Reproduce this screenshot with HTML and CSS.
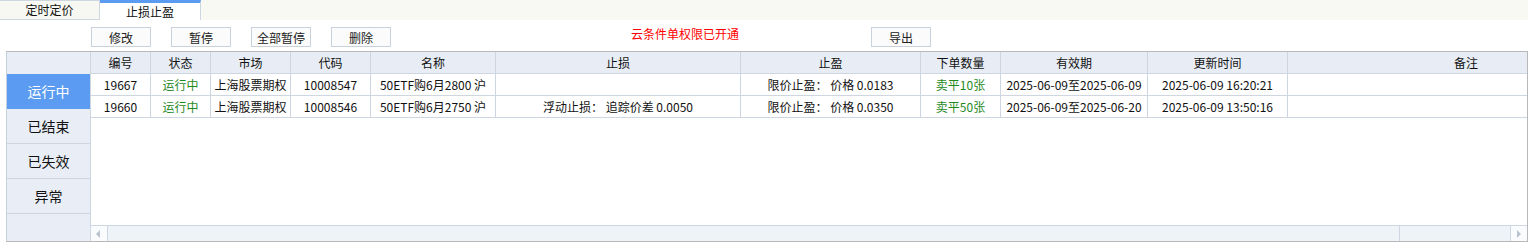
FILE: index.html
```html
<!DOCTYPE html>
<html lang="zh-CN">
<head>
    <meta charset="UTF-8">
    <title>止损止盈</title>
    <link rel="stylesheet" href="styles.css">
</head>
<body>
    <div class="tabbar">
        <div class="tab">定时定价</div>
        <div class="tab active">止损止盈</div>
    </div>

    <div class="toolbar">
        <button class="btn">修改</button>
        <button class="btn">暂停</button>
        <button class="btn">全部暂停</button>
        <button class="btn">删除</button>
        <span class="notice">云条件单权限已开通</span>
        <button class="btn export">导出</button>
    </div>

    <div class="panel">
        <div class="side">
            <div class="side-head"></div>
            <div class="side-item active">运行中</div>
            <div class="side-item">已结束</div>
            <div class="side-item">已失效</div>
            <div class="side-item">异常</div>
        </div>

        <div class="grid-wrap">
            <div class="grid">
                <div class="row head">
                    <div class="cell">编号</div>
                    <div class="cell">状态</div>
                    <div class="cell">市场</div>
                    <div class="cell">代码</div>
                    <div class="cell">名称</div>
                    <div class="cell">止损</div>
                    <div class="cell">止盈</div>
                    <div class="cell">下单数量</div>
                    <div class="cell">有效期</div>
                    <div class="cell">更新时间</div>
                    <div class="cell">备注</div>
                </div>
                <div class="row">
                    <div class="cell">19667</div>
                    <div class="cell green">运行中</div>
                    <div class="cell">上海股票期权</div>
                    <div class="cell">10008547</div>
                    <div class="cell">50ETF购6月2800 沪</div>
                    <div class="cell"></div>
                    <div class="cell">限价止盈： 价格 0.0183</div>
                    <div class="cell green">卖平10张</div>
                    <div class="cell">2025-06-09至2025-06-09</div>
                    <div class="cell">2025-06-09 16:20:21</div>
                    <div class="cell"></div>
                </div>
                <div class="row">
                    <div class="cell">19660</div>
                    <div class="cell green">运行中</div>
                    <div class="cell">上海股票期权</div>
                    <div class="cell">10008546</div>
                    <div class="cell">50ETF购6月2750 沪</div>
                    <div class="cell">浮动止损： 追踪价差 0.0050</div>
                    <div class="cell">限价止盈： 价格 0.0350</div>
                    <div class="cell green">卖平50张</div>
                    <div class="cell">2025-06-09至2025-06-20</div>
                    <div class="cell">2025-06-09 13:50:16</div>
                    <div class="cell"></div>
                </div>
            </div>

            <div class="hscroll">
                <div class="arrow left"></div>
                <div class="track">
                    <div class="thumb"></div>
                </div>
                <div class="arrow right"></div>
            </div>
        </div>
    </div>
</body>
</html>
```

FILE: styles.css
```css
:root {
    --line: #cdd6e1;
    --head-bg: #e8edf5;
    --blue: #5b9cf2;
    --green: #1f8a1f;
    --text: #111;
}

body {
    margin: 0;
    font-family: "Noto Sans CJK SC", "Noto Sans", sans-serif;
    font-size: 12px;
    color: var(--text);
    background: #fff;
    width: 1528px;
    height: 244px;
    overflow: hidden;
}

/* top tabs */
.tabbar {
    display: flex;
    height: 20px;
    background: #f9f9f4;
}

.tab {
    box-sizing: border-box;
    width: 100px;
    height: 20px;
    line-height: 18px;
    text-align: center;
    background: #f7f8f2;
    border-top: 1px solid var(--line);
    border-bottom: 1px solid var(--line);
    border-right: 1px solid var(--line);
}

.tab.active {
    width: 101px;
    background: #fff;
    border-top: 3px solid var(--blue);
    border-bottom: none;
    line-height: 17px;
}

/* toolbar */
.toolbar {
    display: flex;
    align-items: flex-start;
    height: 31px;
    box-sizing: border-box;
    padding: 7px 0 0 91px;
}

.btn {
    box-sizing: border-box;
    width: 60px;
    height: 20px;
    margin: 0 20px 0 0;
    padding: 0;
    font-family: inherit;
    font-size: 12px;
    color: #222;
    background: #fbfbfb;
    border: 1px solid #c9d1dc;
    border-radius: 0;
}

.notice {
    margin-left: 220px;
    width: 108px;
    line-height: 14px;
    color: #ff0000;
    white-space: nowrap;
}

.btn.export {
    margin-left: 132px;
}

/* main panel */
.panel {
    display: flex;
    box-sizing: border-box;
    margin-left: 6px;
    width: 1522px;
    height: 191px;
    border: 1px solid #b8b8b8;
    border-left-color: #c6d0dc;
}

.side {
    box-sizing: border-box;
    width: 84px;
    flex-shrink: 0;
    background: #e9eef6;
    border-right: 1px solid var(--line);
}

.side-head {
    height: 22px;
}

.side-item {
    box-sizing: border-box;
    height: 35px;
    line-height: 34px;
    text-align: center;
    font-size: 14px;
    border-bottom: 1px solid var(--line);
}

.side-item.active {
    background: var(--blue);
    border-bottom-color: var(--blue);
    color: #fff;
}

.grid-wrap {
    flex: 1;
    display: flex;
    flex-direction: column;
    overflow: hidden;
}

.grid {
    flex: 1;
    overflow: hidden;
}

.row {
    display: grid;
    grid-template-columns: 60px 60px 80px 80px 125px 245px 180px 80px 147px 140px 357px;
    height: 22px;
    box-sizing: border-box;
    border-bottom: 1px solid var(--line);
}

.row.head {
    background: var(--head-bg);
}

.cell {
    box-sizing: border-box;
    border-right: 1px solid var(--line);
    line-height: 21px;
    text-align: center;
    white-space: pre;
    overflow: hidden;
}

.green {
    color: var(--green);
}

/* horizontal scrollbar */
.hscroll {
    display: flex;
    height: 16px;
    box-sizing: border-box;
    border-top: 1px solid var(--line);
    background: #eef3f8;
}

.arrow {
    position: relative;
    box-sizing: border-box;
    width: 17px;
    background: #f9fbfd;
}

.arrow.left {
    border-right: 1px solid var(--line);
}

.arrow.right {
    border-left: 1px solid var(--line);
}

.arrow::after {
    content: "";
    position: absolute;
    top: 4px;
    border-top: 4px solid transparent;
    border-bottom: 4px solid transparent;
}

.arrow.left::after {
    left: 5px;
    border-right: 4px solid #b9c4d0;
}

.arrow.right::after {
    left: 6px;
    border-left: 4px solid #b9c4d0;
}

.track {
    flex: 1;
}

.thumb {
    box-sizing: border-box;
    width: 1292px;
    height: 15px;
    background: #eef3f8;
    border-right: 1px solid var(--line);
}
```
